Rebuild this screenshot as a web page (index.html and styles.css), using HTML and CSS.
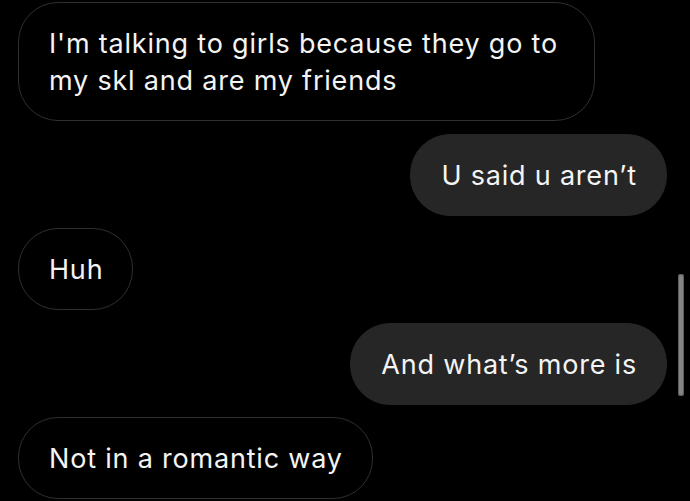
FILE: index.html
```html
<!DOCTYPE html>
<html lang="en">
<head>
<meta charset="utf-8">
<title>Messages</title>
<link rel="stylesheet" href="styles.css">
</head>
<body>
  <main class="thread">
    <div class="msg msg--in">I'm talking to girls because they go to my skl and are my friends</div>
    <div class="msg msg--out">U said u aren’t</div>
    <div class="msg msg--in">Huh</div>
    <div class="msg msg--out">And what’s more is</div>
    <div class="msg msg--in">Not in a romantic way</div>
  </main>
  <div class="scrollbar" aria-hidden="true"></div>
</body>
</html>
```

FILE: styles.css
```css
html, body {
  margin: 0;
  padding: 0;
  background: #000;
  height: 100%;
  overflow: hidden;
}

body {
  font-family: Inter, "Noto Sans", "Liberation Sans", sans-serif;
  color: #f4f4f4;
}

.thread {
  display: flex;
  flex-direction: column;
  gap: 12.5px;
  padding: 2px 23px 0 18px;
}

.msg {
  box-sizing: border-box;
  max-width: 577px;
  font-size: 27px;
  letter-spacing: 0.8px;
  line-height: 37px;
  padding: 22px 29px 21px 30px;
  border-radius: 40px;
  border: 1px solid #2f2f2f;
}

.msg--in {
  align-self: flex-start;
  background: #000;
}

.msg--out {
  align-self: flex-end;
  background: #262626;
  border-color: #262626;
}

.scrollbar {
  position: absolute;
  left: 678px;
  top: 274px;
  width: 6px;
  height: 122px;
  border-radius: 3px;
  background: #858585;
  box-shadow: inset 0 0 0 1px #5e5e5e;
}
```
